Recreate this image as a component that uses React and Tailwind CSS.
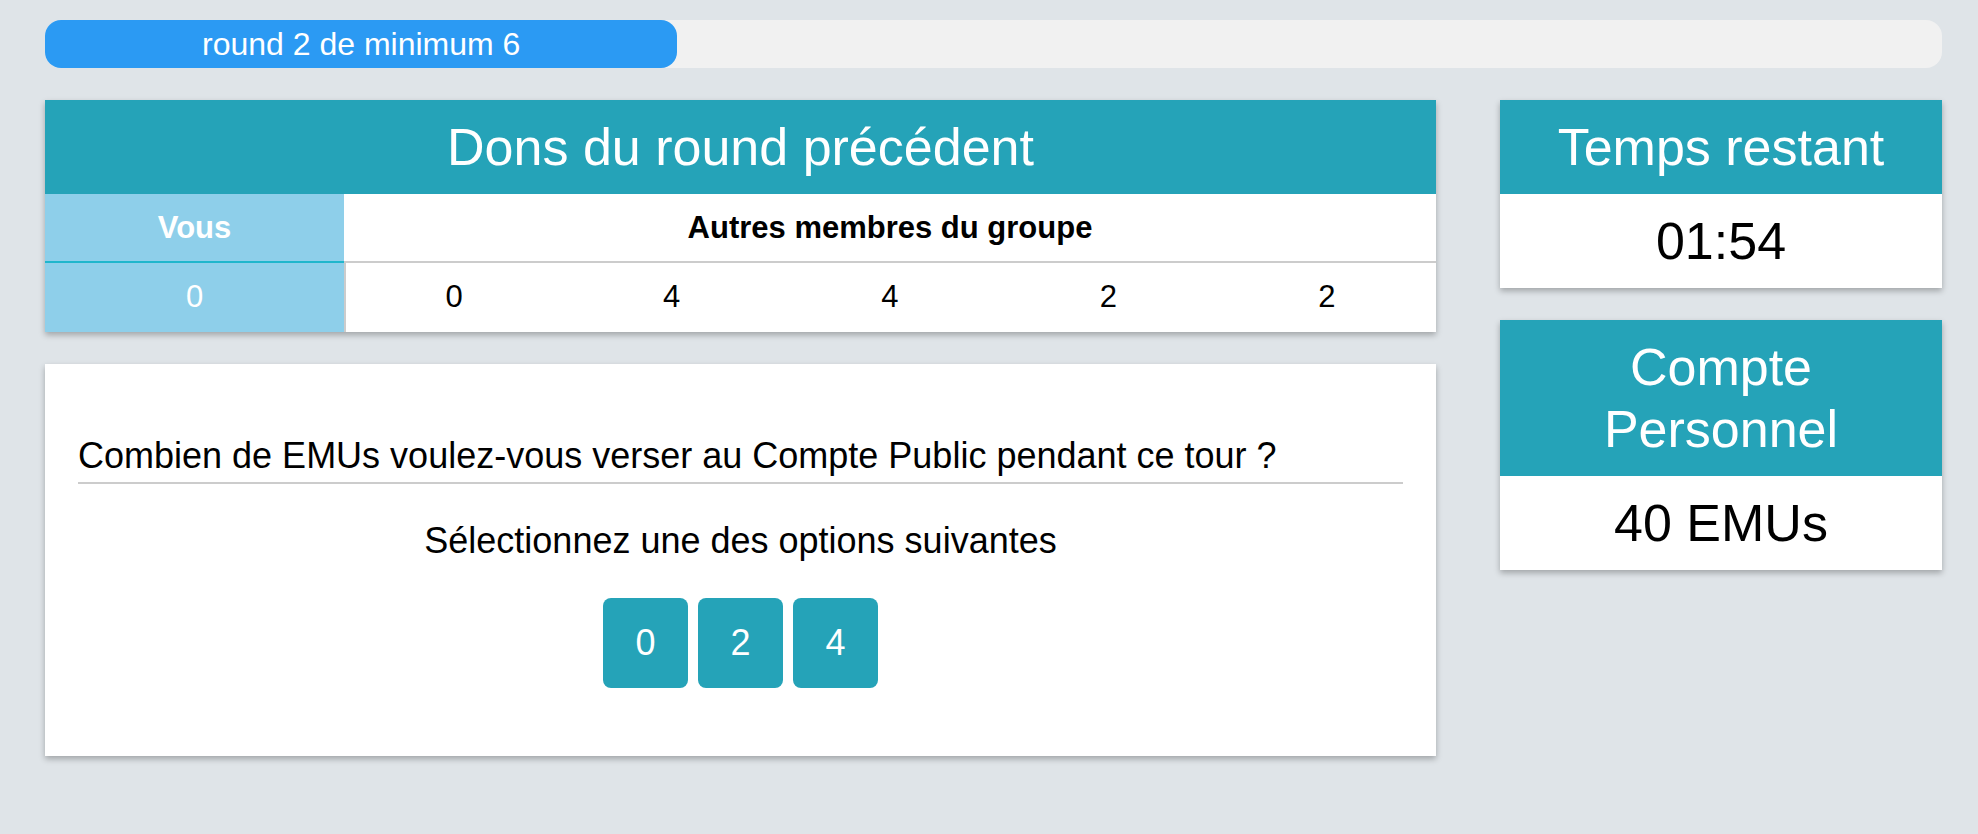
import React from 'react'

const font = { fontFamily: '"Liberation Sans", Arial, Helvetica, sans-serif' }

const others = [0, 4, 4, 2, 2]
const options = [0, 2, 4]

function Card({ title, children }) {
  return (
    <div className="bg-white shadow-[0_3px_6px_rgba(0,0,0,0.28)]">
      <div className="bg-[#25a3b8] px-6 py-4 text-center text-[52px] leading-[62px] text-white">
        {title}
      </div>
      {children}
    </div>
  )
}

export default function App() {
  const round = 2
  const total = 6

  return (
    <div style={font} className="h-[834px] overflow-hidden bg-[#dfe4e8] pl-[45px] pr-[36px] pt-[20px] text-black">
      {/* Progress bar */}
      <div className="h-[48px] w-full rounded-[16px] bg-[#f1f1f1]">
        <div
          className="flex h-full items-center justify-center rounded-[16px] bg-[#2b9af3] text-[32px] text-white"
          style={{ width: `${(round / total) * 100}%` }}
        >
          round {round} de minimum {total}
        </div>
      </div>

      <div className="mt-[32px] grid grid-cols-[1391px_442px] gap-x-[64px]">
        {/* Left column */}
        <div className="flex flex-col gap-[32px]">
          <Card title="Dons du round précédent">
            <div className="grid grid-cols-[299px_repeat(5,1fr)] text-center">
              <div className="h-[69px] border-b-2 border-[#1fb6cc] bg-[#8ecfea] py-4 text-[31px] font-bold leading-[36px] text-white">
                Vous
              </div>
              <div className="col-span-5 h-[69px] border-b-2 border-[#cccccc] py-4 text-[31px] font-bold leading-[36px]">
                Autres membres du groupe
              </div>
              <div className="h-[69px] bg-[#8ecfea] py-4 text-[31px] leading-[36px] text-white">0</div>
              {others.map((v, i) => (
                <div
                  key={i}
                  className={`h-[69px] py-4 text-[31px] leading-[36px] ${i === 0 ? 'border-l-2 border-[#cccccc]' : ''}`}
                >
                  {v}
                </div>
              ))}
            </div>
          </Card>

          <div className="bg-white px-[33px] pb-[68px] pt-[70px] shadow-[0_3px_6px_rgba(0,0,0,0.28)]">
            <p className="border-b-2 border-[#cccccc] pb-[5px] text-[36px] leading-[43px]">
              Combien de EMUs voulez-vous verser au Compte Public pendant ce tour ?
            </p>
            <p className="mt-[35px] text-center text-[36px] leading-[43px]">
              Sélectionnez une des options suivantes
            </p>
            <div className="mt-[36px] flex justify-center gap-[10px]">
              {options.map(o => (
                <button
                  key={o}
                  className="h-[90px] w-[85px] rounded-[8px] bg-[#25a3b8] text-[36px] font-medium text-white"
                >
                  {o}
                </button>
              ))}
            </div>
          </div>
        </div>

        {/* Right column */}
        <div className="flex flex-col gap-[32px]">
          <Card title="Temps restant">
            <div className="py-4 text-center text-[52px] leading-[62px]">01:54</div>
          </Card>
          <Card title="Compte Personnel">
            <div className="py-4 text-center text-[52px] leading-[62px]">40 EMUs</div>
          </Card>
        </div>
      </div>
    </div>
  )
}
